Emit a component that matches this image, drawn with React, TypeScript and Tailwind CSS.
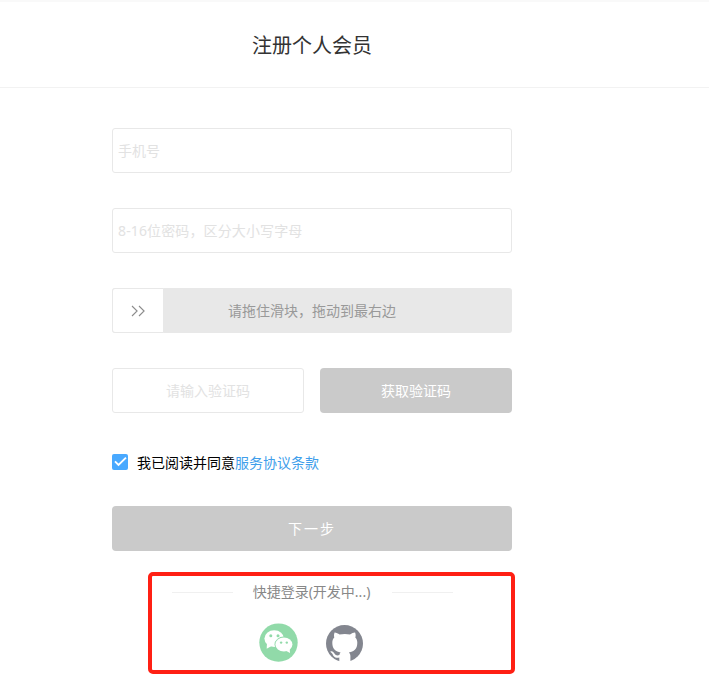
import { useState } from 'react'
import type { ReactNode } from 'react'

const WechatIcon = () => (
  <svg viewBox="0 0 39 39" className="block h-[39px] w-[39px]">
    <circle cx="19.5" cy="19.6" r="19.2" fill="#91daa9" />
    <path d="M8 19.5 L7.7 25.8 L13.5 22.6Z" fill="#fff" />
    <ellipse cx="15.2" cy="15.6" rx="9.8" ry="8.3" fill="#fff" />
    <circle cx="11.8" cy="12.7" r="1.5" fill="#91daa9" />
    <circle cx="19" cy="12.7" r="1.5" fill="#91daa9" />
    <ellipse cx="24.9" cy="21.5" rx="9.4" ry="7.9" fill="#91daa9" />
    <path d="M26.5 27.5 L31 30.1 L30.6 25Z" fill="#fff" />
    <ellipse cx="24.9" cy="21.5" rx="8.5" ry="7" fill="#fff" />
    <circle cx="22.1" cy="19.6" r="1.2" fill="#91daa9" />
    <circle cx="27.8" cy="19.6" r="1.2" fill="#91daa9" />
  </svg>
)

const GithubIcon = () => (
  <svg viewBox="0 0 37 37" className="block h-[37px] w-[37px]">
    <circle cx="18.5" cy="18.5" r="18.5" fill="#83868f" />
    <path
      d="M13.3 37.5V32.6C8.5 33.6 7.4 30.8 6.6 29.2C6.1 28.1 5.3 27.6 4.5 27C4 26.5 4.6 26.1 5.3 26.2C7.1 26.4 8 27.8 8.6 28.8C9.8 30.6 11.5 30.8 13.4 30C13.5 28.8 14 28 14.6 27.4C10 26.7 6.3 24.4 6.3 17.7C6.3 15.4 7 13.8 8.3 12.4C8 11.3 7.7 9.6 8.6 7.5C10.2 7.4 11.9 8.5 13.6 9.6C16.8 8.8 20.8 8.8 24 9.6C25.8 8.4 27.5 7.4 29.1 7.5C29.9 9.5 29.7 11.3 29.3 12.4C30.6 13.8 31.3 15.4 31.3 17.7C31.3 24.4 27.7 26.7 22.9 27.4C23.8 28.2 24.4 29.3 24.4 30.9V37.5Z"
      fill="#fff"
    />
  </svg>
)

const Button = ({ children, className }: { children: ReactNode; className: string }) => (
  <button type="button" className={`h-[45px] rounded-[4px] bg-[#cacaca] text-white ${className}`}>
    {children}
  </button>
)

const App = () => {
  const [agreed, setAgreed] = useState(true)

  const field =
    'h-[45px] rounded-[3px] border border-[#e8e8e8] bg-white px-[5px] placeholder:text-[#e2e2e2] placeholder:opacity-100 focus:outline-none'

  return (
    <div className="h-[687px] w-full overflow-hidden bg-white font-['Noto_Sans','Noto_Sans_CJK_SC',sans-serif] text-sm text-black">
      <header className="h-[88px] border-t-2 border-b border-t-[#f9f9f9] border-b-[#f2f2f2]">
        <h1 className="flex h-[86px] w-[624px] items-center justify-center pt-[2px] text-xl text-[#333]">注册个人会员</h1>
      </header>

      <form className="ml-[112px] flex w-[400px] flex-col pt-10">
        <input type="text" placeholder="手机号" className={field} />
        <input
          type="password"
          placeholder="8-16位密码，区分大小写字母"
          className={`mt-[35px] placeholder:tracking-[0.13px] ${field}`}
        />

        <div className="relative mt-[35px] flex h-[45px] items-center justify-center rounded-[3px] bg-[#e8e8e8] text-[#999]">
          <span>请拖住滑块，拖动到最右边</span>
          <div className="absolute top-0 left-0 flex h-[45px] w-[52px] items-center justify-center rounded-l-[3px] border border-[#e8e8e8] bg-white">
            <svg viewBox="0 0 14 12" className="h-3 w-3.5" fill="none" stroke="#8c8c8c" strokeWidth="1.1">
              <path d="M1 1 6.1 6 1 11M8 1 13.1 6 8 11" />
            </svg>
          </div>
        </div>

        <div className="mt-[35px] flex gap-4">
          <input type="text" placeholder="请输入验证码" className={`w-48 text-center ${field}`} />
          <Button className="w-48">获取验证码</Button>
        </div>

        <div className="mt-[39px] flex h-[21px] items-center">
          <button
            type="button"
            role="checkbox"
            aria-checked={agreed}
            onClick={() => setAgreed(!agreed)}
            className="mr-[9px] mb-0.5 h-4 w-4 rounded-[2px] bg-[#49a9ff]"
          >
            {agreed && (
              <svg viewBox="0 0 16 16" className="block h-4 w-4" fill="none" stroke="#fff" strokeWidth="1.9">
                <path d="M3 7.4 6.5 10.9 14 3.6" />
              </svg>
            )}
          </button>
          <span>我已阅读并同意</span>
          <a href="#" className="text-[#409eeb]">服务协议条款</a>
        </div>

        <Button className="mt-[33px] tracking-[2px]">下一步</Button>

        <section className="relative pt-[31px]">
          <div className="absolute top-[21px] left-[36px] h-[102px] w-[367px] rounded-[5px] border-4 border-[#ff2014]" />
          <div className="flex h-[21px] items-center justify-center gap-5 text-[#888]">
            <span className="h-px w-[61px] bg-[#f0f0f0]" />
            <span className="-mt-0.5 w-[119px] pr-px text-center whitespace-nowrap">快捷登录(开发中...)</span>
            <span className="h-px w-[61px] bg-[#f0f0f0]" />
          </div>
          <div className="mt-5 flex justify-center gap-[28px] pr-0.5">
            <WechatIcon />
            <div className="pt-0.5">
              <GithubIcon />
            </div>
          </div>
        </section>
      </form>
    </div>
  )
}

export default App
